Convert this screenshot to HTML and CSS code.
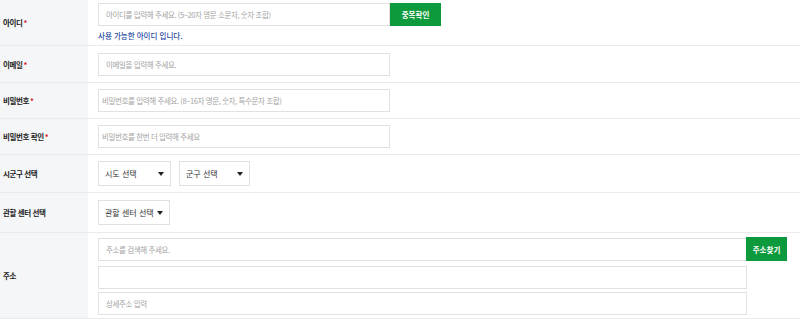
FILE: index.html
```html
<!DOCTYPE html>
<html lang="ko">
<head>
  <meta charset="UTF-8" />
  <meta name="viewport" content="width=device-width, initial-scale=1.0" />
  <title>회원가입</title>
  <link rel="stylesheet" href="styles.css">
</head>
<body>

  <!-- Join Form -->
  <table class="join-table">
    <tr class="row-id">
      <th>아이디<span class="req">*</span></th>
      <td>
        <div class="field-btn">
          <input type="text" class="inp w-md" placeholder="아이디를 입력해 주세요. (5~20자 영문 소문자, 숫자 조합)" />
          <button type="button" class="btn-green">중복확인</button>
        </div>
        <p class="msg-ok">사용 가능한 아이디 입니다.</p>
      </td>
    </tr>
    <tr class="row-mail">
      <th>이메일<span class="req">*</span></th>
      <td><input type="email" class="inp w-md" placeholder="이메일을 입력해 주세요." /></td>
    </tr>
    <tr>
      <th>비밀번호<span class="req">*</span></th>
      <td><input type="password" class="inp w-md pw" placeholder="비밀번호를 입력해 주세요. (8~16자 영문, 숫자, 특수문자 조합)" /></td>
    </tr>
    <tr>
      <th>비밀번호 확인<span class="req">*</span></th>
      <td><input type="password" class="inp w-md pw" placeholder="비밀번호를 한번 더 입력해 주세요" /></td>
    </tr>
    <tr class="row-sel">
      <th>시군구 선택</th>
      <td>
        <div class="sel-group">
          <span class="sel sel-sido"><select><option>시도 선택</option></select></span>
          <span class="sel sel-gugun"><select><option>군구 선택</option></select></span>
        </div>
      </td>
    </tr>
    <tr class="row-center">
      <th>관할 센터 선택</th>
      <td>
        <div class="sel-group">
          <span class="sel sel-center"><select><option>관할 센터 선택</option></select></span>
        </div>
      </td>
    </tr>
    <tr class="row-addr">
      <th>주소</th>
      <td>
        <div class="field-btn">
          <input type="text" class="inp w-lg" placeholder="주소를 검색해 주세요." />
          <button type="button" class="btn-green btn-addr">주소찾기</button>
        </div>
        <input type="text" class="inp w-lg addr-line" />
        <input type="text" class="inp w-lg addr-line addr-last" placeholder="상세주소 입력" />
      </td>
    </tr>
  </table>

</body>
</html>
```

FILE: styles.css
```css
body {
  margin: 0;
  padding: 0;
  background: #fff;
  font-family: "Noto Sans CJK KR", "Noto Sans", sans-serif;
  color: #222;
}
.join-table {
  width: 100%;
  border-collapse: collapse;
}
.join-table th,
.join-table td {
  border-bottom: 1px solid #ebebeb;
  vertical-align: middle;
}
.join-table th {
  width: 85px;
  padding: 0 0 0 3px;
  background-color: #f5f6f8;
  text-align: left;
  font-size: 7.5px;
  font-weight: 700;
  color: #222;
  letter-spacing: -0.4px;
}
.join-table td {
  padding: 6px 10px;
  line-height: 0;
}
.req {
  color: #d6182d;
  margin-left: 1px;
}
.row-id td {
  padding: 3px 10px 4px;
}
.row-mail td {
  padding: 7px 10px 6px;
}
.row-sel td {
  padding: 6px 10px;
}
.row-center td {
  padding: 7px 10px;
}
.row-addr td {
  padding: 4px 10px 3px;
}

/* inputs */
.inp {
  display: block;
  box-sizing: border-box;
  height: 23px;
  margin: 0;
  padding: 0 7px;
  border: 1px solid #e1e1e1;
  border-radius: 0;
  background: #fff;
  font-family: inherit;
  font-size: 7.5px;
  letter-spacing: -0.4px;
  color: #333;
  outline: none;
}
.inp::placeholder {
  color: #a3a3a3;
}
.inp.pw {
  padding-left: 3px;
}
.w-md {
  width: 292px;
}
.w-lg {
  width: 649px;
}
.addr-line {
  margin-top: 5px;
}
.addr-last {
  margin-top: 3px;
}

.field-btn {
  display: flex;
  align-items: center;
}
.btn-green {
  height: 23px;
  width: 51px;
  margin: 0;
  padding: 0;
  border: none;
  background-color: #0d9a3c;
  color: #fff;
  font-family: inherit;
  font-size: 7.5px;
  font-weight: 700;
  cursor: pointer;
}
.btn-addr {
  width: 41px;
  height: 24px;
  margin-left: -1px;
}

.msg-ok {
  margin: 5px 0 0;
  font-size: 7.5px;
  line-height: 10px;
  font-weight: 500;
  color: #2c4da6;
}

/* selects */
.sel-group {
  display: flex;
  gap: 8px;
}
.sel {
  position: relative;
  display: block;
}
.sel select {
  display: block;
  box-sizing: border-box;
  height: 25px;
  margin: 0;
  padding: 0 6px;
  border: 1px solid #e1e1e1;
  border-radius: 0;
  background: #fff;
  appearance: none;
  -webkit-appearance: none;
  font-family: inherit;
  font-size: 8px;
  color: #333;
  outline: none;
}
.sel::after {
  content: "";
  position: absolute;
  top: 11px;
  right: 7px;
  border-left: 3px solid transparent;
  border-right: 3px solid transparent;
  border-top: 4px solid #222;
  pointer-events: none;
}
.sel-sido select {
  width: 73px;
}
.sel-gugun select {
  width: 71px;
}
.sel-center select {
  width: 72px;
}
```
